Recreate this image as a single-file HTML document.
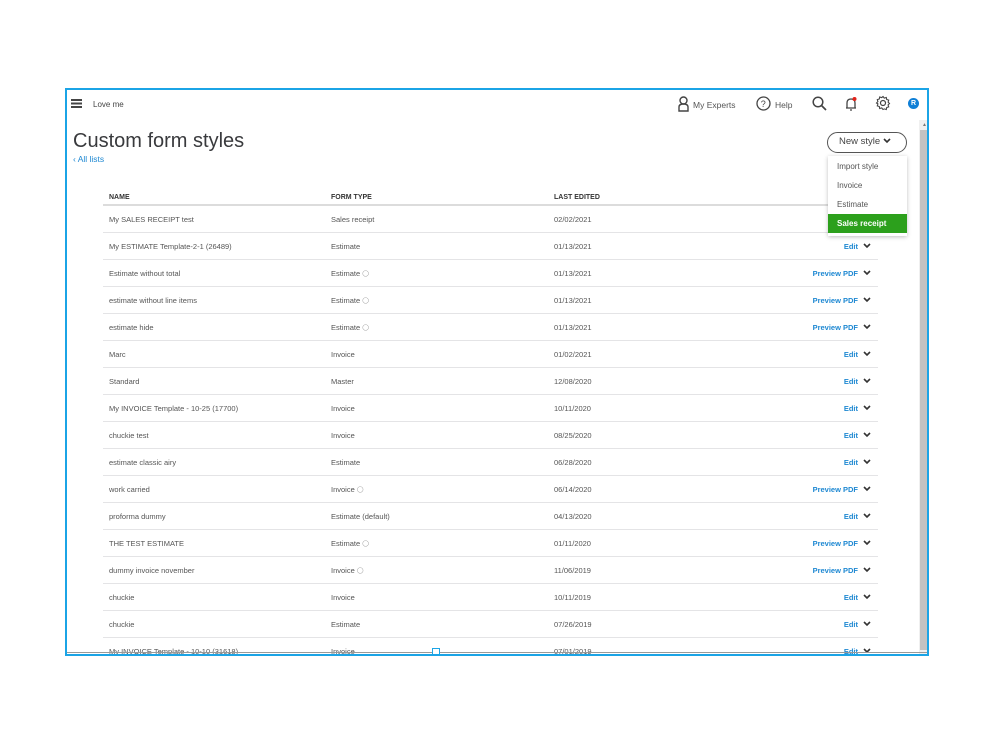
<!DOCTYPE html>
<html><head><style>
*{margin:0;padding:0;box-sizing:border-box}
body{width:999px;height:749px;background:#fff;font-family:"Liberation Sans",sans-serif;position:relative;overflow:hidden}
.frame{position:absolute;left:65px;top:88px;width:864px;height:568px;border:2px solid #1ba4e6;overflow:hidden;background:#fff}
.abs{position:absolute}
.t{font-size:8px;color:#555;white-space:nowrap}
.row{position:absolute;left:36px;width:775px;height:27px;border-bottom:1px solid #e4e4e6}
.row span{position:absolute;top:9px;font-size:7.5px;color:#555;white-space:nowrap}
.row i{font-style:normal;font-size:6px;color:#999;vertical-align:1px}
.act{position:absolute;right:20px;top:9px;font-size:7.5px;color:#1e88d2;font-weight:bold}
.chev{position:absolute;right:7px;top:10px}
.dd div{height:19px;padding-left:9px;line-height:19px;font-size:8px;color:#555}
</style></head><body>
<div class="frame">
 <div class="abs" style="left:4px;top:9px;width:11px;height:1.6px;background:#444;box-shadow:0 3.5px 0 #444,0 7px 0 #444"></div>
 <div class="abs t" style="left:26px;top:10px;font-size:8px;color:#444">Love me</div>
 <svg class="abs" style="left:610px;top:6px" width="13" height="16" viewBox="0 0 13 16"><circle cx="6.5" cy="4.5" r="3.5" fill="none" stroke="#444" stroke-width="1.4"/><path d="M2 15V11q0-3 4.5-3T11 11v4z" fill="none" stroke="#444" stroke-width="1.4"/></svg>
 <div class="abs t" style="left:626px;top:10px;color:#555;font-size:8.5px">My Experts</div>
 <svg class="abs" style="left:689px;top:6px" width="15" height="15"><circle cx="7.5" cy="7.5" r="6.5" fill="none" stroke="#444" stroke-width="1.3"/><text x="4.8" y="11" font-size="9" fill="#444" font-family="Liberation Sans">?</text></svg>
 <div class="abs t" style="left:708px;top:10px;color:#555;font-size:8.5px">Help</div>
 <svg class="abs" style="left:745px;top:6px" width="16" height="16"><circle cx="6" cy="6" r="4.8" fill="none" stroke="#444" stroke-width="1.5"/><path d="M9.5 9.5L14 14" stroke="#444" stroke-width="1.7"/></svg>
 <svg class="abs" style="left:777px;top:6px" width="14" height="15"><path d="M3 12V7q0-4 4-4t4 4v5zM2 12h10M6 14h2" fill="none" stroke="#444" stroke-width="1.3"/><circle cx="10.5" cy="3" r="2" fill="#e2231a"/></svg>
 <svg class="abs" style="left:808px;top:5px" width="16" height="16" viewBox="0 0 16 16"><circle cx="8" cy="8" r="2.5" fill="none" stroke="#444" stroke-width="1.2"/><path d="M8 1.5l1.3 1.6 2-.6.4 2 2 .6-.6 2 1.4 1.4-1.4 1.4.6 2-2 .6-.4 2-2-.6L8 14.5l-1.3-1.6-2 .6-.4-2-2-.6.6-2L1.5 8l1.4-1.4-.6-2 2-.6.4-2 2 .6z" fill="none" stroke="#444" stroke-width="1.1"/></svg>
 <div class="abs" style="left:841px;top:8px;width:11px;height:11px;border-radius:50%;background:#0f7fd6;color:#fff;font-size:7px;font-weight:bold;text-align:center;line-height:11px">R</div>
 <div class="abs" style="left:852px;top:30px;width:9px;height:536px;background:#f0f0f0"></div>
 <div class="abs" style="left:853px;top:40px;width:7px;height:520px;background:#c2c2c2"></div>
 <div class="abs" style="left:855px;top:32px;font-size:5px;color:#777">▲</div>

 <div class="abs" style="left:6px;top:40px;font-size:20px;color:#393a3d">Custom form styles</div>
 <div class="abs" style="left:6px;top:64px;font-size:8.5px;color:#1e88d2">‹ All lists</div>

 <div class="abs" style="left:36px;top:96px;width:775px;height:20px;border-bottom:2px solid #dcdcdc">
  <span class="abs" style="left:6px;top:8px;font-size:7px;font-weight:bold;color:#333">NAME</span>
  <span class="abs" style="left:228px;top:8px;font-size:7px;font-weight:bold;color:#333">FORM TYPE</span>
  <span class="abs" style="left:451px;top:8px;font-size:7px;font-weight:bold;color:#333">LAST EDITED</span>
 </div>
 <div id="rows"></div>

 <div class="abs" style="z-index:5;left:760px;top:42px;width:80px;height:21px;border:1.5px solid #555;border-radius:11px;font-size:9.5px;color:#444;line-height:18px;padding-left:11px;background:#fff">New style <svg width="8" height="6"><path d="M1 1l3 3 3-3" fill="none" stroke="#333" stroke-width="1.6"/></svg></div>
 <div class="abs dd" style="z-index:5;left:761px;top:66px;width:79px;height:80px;background:#fff;box-shadow:0 1px 4px rgba(0,0,0,.25);padding-top:1px">
  <div>Import style</div><div>Invoice</div><div>Estimate</div>
  <div style="background:#2ca01c;color:#fff;font-weight:bold">Sales receipt</div>
 </div>
</div>
<div class="abs" style="left:67px;top:652px;width:860px;height:1px;background:#999"></div>
<div class="abs" style="left:432px;top:648px;width:8px;height:7px;border:1px solid #1ba4e6;background:#fff"></div>
<script>
var I=' <i>&#9711;</i>';
var d=[["My SALES RECEIPT test","Sales receipt","02/02/2021",""],
["My ESTIMATE Template-2-1 (26489)","Estimate","01/13/2021","Edit"],
["Estimate without total","Estimate"+I,"01/13/2021","Preview PDF"],
["estimate without line items","Estimate"+I,"01/13/2021","Preview PDF"],
["estimate hide","Estimate"+I,"01/13/2021","Preview PDF"],
["Marc","Invoice","01/02/2021","Edit"],
["Standard","Master","12/08/2020","Edit"],
["My INVOICE Template - 10-25 (17700)","Invoice","10/11/2020","Edit"],
["chuckie test","Invoice","08/25/2020","Edit"],
["estimate classic airy","Estimate","06/28/2020","Edit"],
["work carried","Invoice"+I,"06/14/2020","Preview PDF"],
["proforma dummy","Estimate (default)","04/13/2020","Edit"],
["THE TEST ESTIMATE","Estimate"+I,"01/11/2020","Preview PDF"],
["dummy invoice november","Invoice"+I,"11/06/2019","Preview PDF"],
["chuckie","Invoice","10/11/2019","Edit"],
["chuckie","Estimate","07/26/2019","Edit"],
["My INVOICE Template - 10-10 (31618)","Invoice","07/01/2019","Edit"]];
var h="";d.forEach(function(r,i){var top=116+i*27;
h+='<div class="row" style="top:'+top+'px"><span style="left:6px">'+r[0]+'</span><span style="left:228px">'+r[1]+'</span><span style="left:451px">'+r[2]+'</span>'+(r[3]?'<div class="act">'+r[3]+'</div><svg class="chev" width="8" height="6"><path d="M1 1l3 3 3-3" fill="none" stroke="#333" stroke-width="1.6"/></svg>':'')+'</div>';});
document.getElementById("rows").innerHTML=h;
</script>
</body></html>
